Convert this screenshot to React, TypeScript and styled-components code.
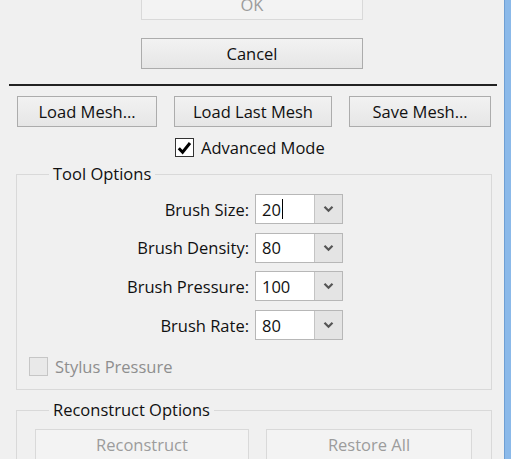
import React, { FC } from "react";
import styled, { createGlobalStyle } from "styled-components";

const GlobalStyle = createGlobalStyle`
  html, body {
    margin: 0;
    padding: 0;
    background: #f0f0f0;
    overflow: hidden;
  }
  body {
    font-family: "Open Sans", "Noto Sans", sans-serif;
    font-size: 16.5px;
    color: #111;
  }
`;

interface ComboProps {
  label: string;
  value: string;
  caret?: boolean;
}

const Combo: FC<ComboProps> = ({ label, value, caret }) => (
  <>
    <FieldLabel>{label}</FieldLabel>
    <ComboBox>
      <ComboInput>
        {value}
        {caret && <Caret />}
      </ComboInput>
      <ComboArrow>
        <svg width="11" height="8" viewBox="0 0 11 8">
          <path d="M1.5 1.8 L5.5 5.8 L9.5 1.8" fill="none" stroke="#555" strokeWidth="2.2" />
        </svg>
      </ComboArrow>
    </ComboBox>
  </>
);

const CheckMark = () => (
  <svg width="15" height="14" viewBox="0 0 15 14">
    <path d="M1.8 7.2 L5.6 11.2 L13 2" fill="none" stroke="#000" strokeWidth="3" />
  </svg>
);

const App: FC = () => {
  const brushes = [
    { label: "Brush Size:", value: "20", caret: true },
    { label: "Brush Density:", value: "80" },
    { label: "Brush Pressure:", value: "100" },
    { label: "Brush Rate:", value: "80" },
  ];

  return (
    <Window>
      <GlobalStyle />
      <Content>
        <DialogButtons>
          <PushButton disabled>OK</PushButton>
          <PushButton>Cancel</PushButton>
        </DialogButtons>
        <Separator />
        <MeshRow>
          <PushButton width={140}>Load Mesh…</PushButton>
          <PushButton width={158}>Load Last Mesh</PushButton>
          <PushButton width={142}>Save Mesh…</PushButton>
        </MeshRow>
        <AdvancedRow>
          <CheckLine>
            <CheckBox>
              <CheckMark />
            </CheckBox>
            Advanced Mode
          </CheckLine>
        </AdvancedRow>
        <Group>
          <Legend>Tool Options</Legend>
          <OptionGrid>
            {brushes.map((b) => (
              <Combo key={b.label} label={b.label} value={b.value} caret={b.caret} />
            ))}
          </OptionGrid>
          <CheckLine disabled>
            <CheckBox disabled />
            Stylus Pressure
          </CheckLine>
        </Group>
        <Group top={7} spaced>
          <Legend>Reconstruct Options</Legend>
          <ReconstructRow>
            <PushButton disabled width={214}>Reconstruct</PushButton>
            <PushButton disabled width={206}>Restore All</PushButton>
          </ReconstructRow>
        </Group>
      </Content>
      <BlueEdge />
    </Window>
  );
};

const Window = styled.div`
  display: flex;
  height: 459px;
  width: 511px;
  overflow: hidden;
`;

const Content = styled.div`
  flex: 1;
  padding: 0 7px 0 9px;
  margin-top: -11px;
`;

const BlueEdge = styled.div`
  width: 6px;
  background: #8bb9e9;
  border-left: 1px solid #6f9fd3;
`;

const DialogButtons = styled.div`
  display: flex;
  flex-direction: column;
  align-items: center;
  gap: 18px;
  padding-right: 2px;
`;

const PushButton = styled.button<{ width?: number }>`
  width: ${(p) => (p.width ? `${p.width}px` : "222px")};
  height: 31px;
  padding: 0;
  font-family: inherit;
  font-size: 16.5px;
  color: #111;
  border: 1px solid #acacac;
  background: linear-gradient(#f2f2f2, #e6e6e6);
  box-sizing: border-box;
  display: flex;
  align-items: center;
  justify-content: center;

  &:disabled {
    color: #9c9c9c;
    border-color: #d9d9d9;
    background: #f3f3f3;
  }
`;

const Separator = styled.div`
  height: 2px;
  background: #222;
  margin-top: 15px;
`;

const MeshRow = styled.div`
  display: flex;
  gap: 17px;
  margin-top: 10px;
  padding-left: 8px;
`;

const AdvancedRow = styled.div`
  display: flex;
  padding-left: 166px;
  margin-top: 11px;
`;

const CheckLine = styled.div<{ disabled?: boolean }>`
  display: flex;
  align-items: center;
  gap: 7px;
  height: 19px;
  color: ${(p) => (p.disabled ? "#8e8e8e" : "#111")};
`;

const CheckBox = styled.span<{ disabled?: boolean }>`
  width: 19px;
  height: 19px;
  box-sizing: border-box;
  border: 1px solid ${(p) => (p.disabled ? "#c6c6c6" : "#333")};
  background: ${(p) => (p.disabled ? "#e9e9e9" : "#fff")};
  display: flex;
  align-items: center;
  justify-content: center;
`;

const Group = styled.fieldset<{ spaced?: boolean; top?: number }>`
  margin: ${(p) => (p.spaced ? "8px" : "5px")} 0 0 7px;
  width: 476px;
  box-sizing: border-box;
  border: 1px solid #d9d9d9;
  padding: ${(p) => (p.top !== undefined ? p.top : 8)}px 0 13px 12px;
  min-width: 0;
`;

const Legend = styled.legend`
  margin-left: 20px;
  padding: 0 4px;
  line-height: 24px;
  color: #111;
`;

const OptionGrid = styled.div`
  display: grid;
  grid-template-columns: 220px 88px;
  column-gap: 6px;
  row-gap: 8.7px;
  align-items: center;
  margin-bottom: 17px;
`;

const FieldLabel = styled.span`
  text-align: right;
`;

const ComboBox = styled.div`
  display: flex;
  height: 30px;
  box-sizing: border-box;
  border: 1px solid #b7b7b7;
  background: #fff;
`;

const ComboInput = styled.div`
  flex: 1;
  display: flex;
  align-items: center;
  padding-left: 6px;
`;

const Caret = styled.span`
  width: 1px;
  height: 20px;
  background: #000;
  margin-left: 1px;
`;

const ComboArrow = styled.div`
  width: 27px;
  display: flex;
  align-items: center;
  justify-content: center;
  background: #e4e4e4;
  border-left: 1px solid #c4c4c4;
`;

const ReconstructRow = styled.div`
  display: flex;
  gap: 17px;
  margin-left: 6px;
`;

export default App;
